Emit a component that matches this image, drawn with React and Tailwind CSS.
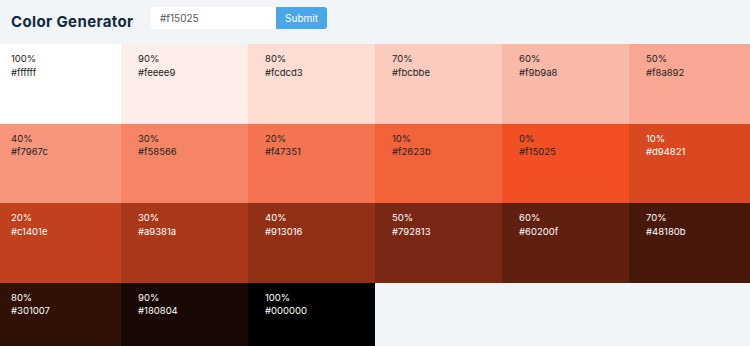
import * as React from "react";

const colors = [
  ["100%", "#ffffff"], ["90%", "#feeee9"], ["80%", "#fcdcd3"], ["70%", "#fbcbbe"], ["60%", "#f9b9a8"], ["50%", "#f8a892"],
  ["40%", "#f7967c"], ["30%", "#f58566"], ["20%", "#f47351"], ["10%", "#f2623b"], ["0%", "#f15025"], ["10%", "#d94821"],
  ["20%", "#c1401e"], ["30%", "#a9381a"], ["40%", "#913016"], ["50%", "#792813"], ["60%", "#60200f"], ["70%", "#48180b"],
  ["80%", "#301007"], ["90%", "#180804"], ["100%", "#000000"],
];

function Swatch({ weight, hex, index }) {
  const light = index > 10;
  return (
    <article
      className={`h-[79.5px] pl-[17px] pt-[8px] text-[9.5px] leading-[13.5px] ${light ? "text-white" : "text-[#222]"}`}
      style={{ backgroundColor: hex }}
    >
      <p>{weight}</p>
      <p>{hex}</p>
    </article>
  );
}

export default function App() {
  return (
    <div className="w-[750px] h-[346px] overflow-hidden bg-[#f1f5f8] font-['Inter',sans-serif]">
      {/* Header */}
      <section className="h-[44px] flex items-center pl-[11px]">
        <h3 className="text-[15px] font-bold tracking-[0.025em] text-[#102a42] w-[140px]">Color Generator</h3>
        <form className="flex h-[22px] -mt-[8px]">
          <input
            type="text"
            defaultValue="#f15025"
            className="w-[125px] bg-white rounded-l-[3px] pl-[9px] text-[10px] text-[#555] outline-none"
          />
          <button
            type="submit"
            className="w-[51px] bg-[#49a6e9] text-white text-[10px] rounded-r-[3px]"
          >
            Submit
          </button>
        </form>
      </section>

      {/* Swatches */}
      <section className="w-[762px] -ml-[6px] grid grid-cols-6">
        {colors.map(([w, hex], i) => (
          <Swatch key={i} weight={w} hex={hex} index={i} />
        ))}
      </section>
    </div>
  );
}
